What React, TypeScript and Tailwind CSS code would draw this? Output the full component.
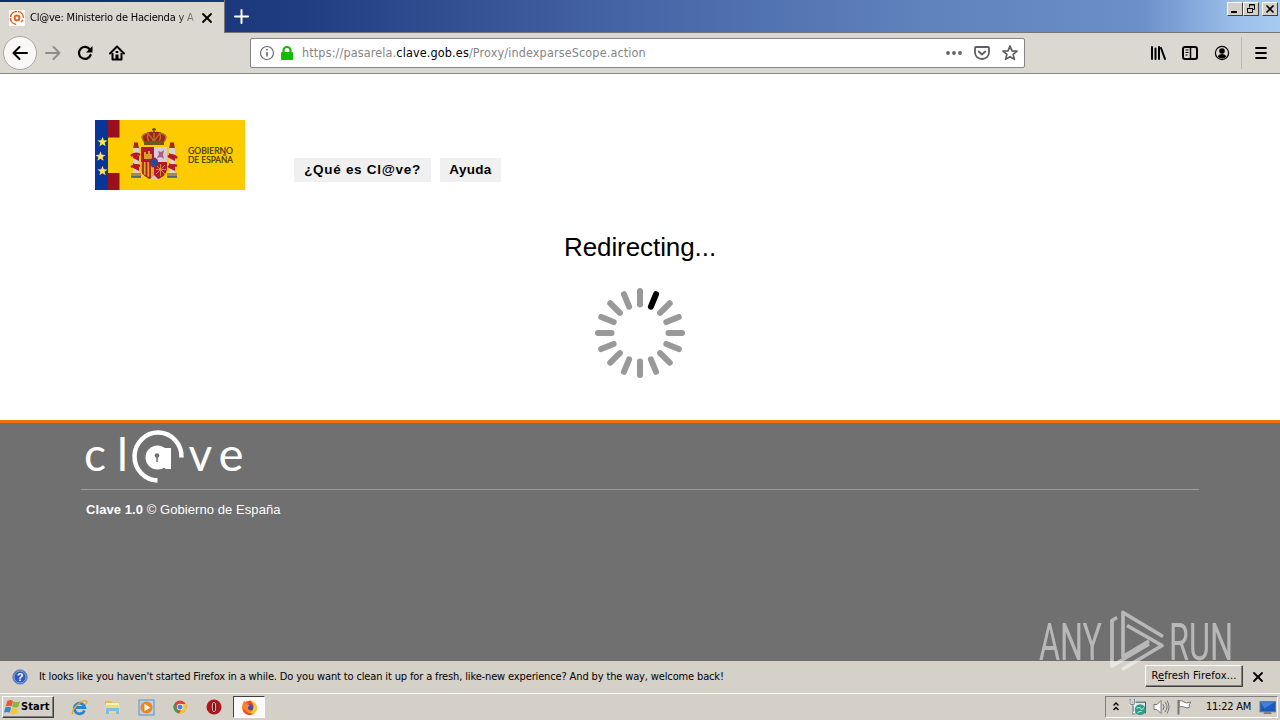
import React from 'react';
import { LuX } from 'react-icons/lu';

const ui = "font-['DejaVu_Sans_Condensed','DejaVu_Sans',sans-serif] [font-stretch:condensed]";

function Star({ x, y }: { x: number; y: number }) {
  return (
    <path
      transform={`translate(${x} ${y}) scale(1.05)`}
      d="M0-5 1.2-1.6 4.8-1.5 2 .7 3 4.1 0 2.1-3 4.1-2 .7-4.8-1.5-1.2-1.6Z"
      fill="#ffe45a"
    />
  );
}

function Pillar({ x }: { x: number }) {
  return (
    <g transform={`translate(${x} 0)`}>
      <rect x="-3" y="28" width="6" height="28" fill="#d9d3cb" />
      <path d="M-3 33l6 3v5l-6-3zM-3 43l6 3v5l-6-3z" fill="#b5182a" />
      <path d="M-3 28h6l-1-4h-4z" fill="#7c4a12" />
      <rect x="-2" y="22.500" width="4" height="3" fill="#b5182a" />
      <path d="M-5 53H5v4H-5z" fill="#a78b3f" />
      <path d="M-5 57H5" stroke="#35599c" strokeWidth="1.500" />
    </g>
  );
}

function Emblem() {
  return (
    <svg width="150" height="70" viewBox="0 0 150 70" className="block">
      <rect width="150" height="70" fill="#fecb00" />
      <rect width="13" height="70" fill="#0a3598" />
      <path d="M13 0H24.500V17.500H13zM13 53H24.500V70H13z" fill="#990f1b" />
      <Star x={7.5} y={22} />
      <Star x={5.5} y={36.500} />
      <Star x={7.5} y={51} />
      <Pillar x={41} />
      <Pillar x={77} />
      <path d="M36 36q4-4 9-1M73 37q4-4 9 1M36 47q5-3 9-1M73 47q5-3 9-1" stroke="#b5182a" strokeWidth="2.500" fill="none" />
      <path d="M49 22q-5-6 0-8 5-3 10-2 5-1 10 2 5 2 0 8z" fill="#a71d25" />
      <path d="M49 22q-4-6 1-8 4-2 9 8 5-10 9-8 5 2 1 8M59 22V11M54 22q-3-6 0-9M64 22q3-6 0-9" stroke="#a87a1c" strokeWidth="1.400" fill="none" />
      <path d="M59 8v5M57 9.500h4" stroke="#634116" strokeWidth="1.300" />
      <rect x="49" y="21" width="20" height="4" fill="#7d5015" />
      <path d="M51 23h2m2 0h2m2 0h2m2 0h2" stroke="#35713b" strokeWidth="1.500" />
      <path d="M46 27H72V49Q71 58 59 60 47 58 46 49Z" fill="#b01a2e" />
      <path d="M59 27H72V42H59z" fill="#dbcbd5" />
      <path d="M46 42H59V58Q48 57 46 49Z" fill="#dfa71b" />
      <path d="M48 42V54M51.500 42V56M55 42V58" stroke="#b01a2e" strokeWidth="1.700" />
      <path d="M49 38V32h2v2h2v-3h2v3h2v5h-8z" fill="#d7a127" />
      <path d="M62 38l2-4-1-3 3 1 3-2-1 5 1 4-3-2z" fill="#b25c83" />
      <path d="M61 45l9 9M70 45l-9 9M61 49.500h10M65.500 44v12" stroke="#cf8c28" strokeWidth="1" />
      <ellipse cx="59" cy="42.500" rx="3.600" ry="4.500" fill="#234b9e" stroke="#b01a2e" />
      <path d="M54 60l5-5 5 5z" fill="#d9cba7" />
      <g fontFamily="Lato, sans-serif" fontSize="9.500" fill="#38300c" stroke="#38300c" strokeWidth=".2">
        <text x="93" y="33.500" textLength="45" lengthAdjust="spacingAndGlyphs">GOBIERNO</text>
        <text x="93" y="42.500" textLength="45" lengthAdjust="spacingAndGlyphs">DE ESPAÑA</text>
      </g>
    </svg>
  );
}

function Spinner() {
  return (
    <svg width="92" height="92" viewBox="-46 -46 92 92" className="block">
      {Array.from({ length: 16 }, (_, i) => (
        <line
          key={i}
          x1="0"
          y1="-42"
          x2="0"
          y2="-28.500"
          transform={`rotate(${i * 22.5})`}
          stroke={i === 1 ? '#000' : '#999'}
          strokeWidth="6"
          strokeLinecap="round"
        />
      ))}
    </svg>
  );
}

function ClaveLogo() {
  return (
    <svg width="164" height="60" viewBox="82 428 164 60" className="block overflow-visible">
      <g fontFamily="Lato, sans-serif" fontSize="46" fill="#fff">
        <text x="84" y="470.500">c</text>
        <text x="117" y="470.500">l</text>
        <text x="188.500" y="470.500">v</text>
        <text x="218.500" y="470.500" textLength="25" lengthAdjust="spacingAndGlyphs">e</text>
      </g>
      <path d="M181.500 457.500A23.500 24 0 1 0 157.500 480.500" fill="none" stroke="#fff" strokeWidth="4.500" />
      <circle cx="157.500" cy="457.500" r="12" fill="#fff" />
      <path d="M161 448h10v21h-5l-5-3z" fill="#fff" />
      <circle cx="157" cy="455.500" r="2.300" fill="#707070" />
      <path d="M156.300 456h1.500v6h-1.500z" fill="#707070" />
    </svg>
  );
}

function Watermark() {
  return (
    <svg width="200" height="66" viewBox="1036 608 200 66" className="absolute left-[1036px] top-[608px] opacity-50">
      <g fontFamily="Roboto, sans-serif" fontWeight="400" fontSize="51" fill="#fff">
        <text x="1039" y="659.500" textLength="63" lengthAdjust="spacingAndGlyphs">ANY</text>
        <text x="1169" y="659.500" textLength="64" lengthAdjust="spacingAndGlyphs">RUN</text>
      </g>
      <g fill="none" stroke="#fff" strokeWidth="3.700" strokeLinejoin="round">
        <path d="M1117 617.500L1112 620.500V666L1149 644" />
        <path d="M1163 636.500L1123 612.500V656.500L1149 641" />
        <path d="M1127 625.500L1162 645.500L1122 669.500" />
      </g>
    </svg>
  );
}

function Tab() {
  return (
    <div className="mt-[2px] flex h-[31px] w-[224px] items-center bg-[#dbd8d2] pl-[9px]">
      <svg width="16" height="16" viewBox="0 0 16 16" className="shrink-0 bg-white">
        <g fill="none" stroke="#e8601c">
          <circle cx="8" cy="8" r="2.400" strokeWidth="2" />
          <path d="M14.500 8A6.500 6.500 0 1 0 8 14.500" strokeWidth="1.500" strokeDasharray="9 1" />
          <path d="M12 12l2-2" strokeWidth="1.500" />
        </g>
      </svg>
      <span className={`${ui} ml-[5px] w-[165px] overflow-hidden whitespace-nowrap pt-px text-[11px] tracking-[-0.2px] text-black [mask-image:linear-gradient(to_right,black_145px,transparent_174px)]`}>
        Cl@ve: Ministerio de Hacienda y A
      </span>
      <LuX className="ml-[4px] shrink-0 text-black" size={16} strokeWidth={2.7} />
    </div>
  );
}

function WindowButton({ children }: { children: React.ReactNode }) {
  return (
    <div className="h-[14px] w-[16px] border border-b-[#404040] border-l-white border-r-[#404040] border-t-white bg-[#d4d0c8]">
      <svg width="14" height="12" viewBox="0 0 14 12" fill="none" stroke="#000" className="block">
        {children}
      </svg>
    </div>
  );
}

function TitleBar() {
  return (
    <div className="flex h-[33px] border-b border-[#777] bg-[linear-gradient(90deg,#0f2b70_0px,#213d82_300px,#4564a5_620px,#6082bd_930px,#6a8fc9_1140px,#9dc0ec_1240px,#a6caf0_1280px)]">
      <Tab />
      <div className="flex h-[32px] w-[33px] items-center justify-center border-l border-[#777]">
        <svg width="15" height="15" viewBox="0 0 15 15" className="block">
          <path d="M7.500 1v13M1 7.500h13" stroke="#fff" strokeWidth="2" strokeLinecap="round" />
        </svg>
      </div>
      <div className="ml-auto mr-[2px] mt-[2px] flex">
        <WindowButton><path d="M3 9h6" strokeWidth="2" /></WindowButton>
        <WindowButton>
          <path d="M5.500 4.500v-3h5v5H9M5 2h6M3.500 5.500h5v4h-5zM3 5.500h6" />
        </WindowButton>
        <div className="w-[3px]" />
        <WindowButton><path d="M3.500 2.500l7 7M10.500 2.500l-7 7" strokeWidth="1.700" /></WindowButton>
      </div>
    </div>
  );
}

function Toolbar() {
  return (
    <div className="flex h-[41px] items-center border-b border-[#888] bg-[#dbd8d2]">
      <div className="ml-[3px] flex h-[34px] w-[34px] items-center justify-center rounded-full border border-[#aaa8a4] bg-[#f9f8f7]">
        <svg width="16" height="16" viewBox="0 0 16 16" fill="none" stroke="#000" strokeWidth="2" strokeLinecap="round" strokeLinejoin="round">
          <path d="M15 8H1.500M7.500 2L1.500 8l6 6" />
        </svg>
      </div>
      <svg className="ml-[8px]" width="16" height="16" viewBox="0 0 16 16" fill="none" stroke="#8f8d8a" strokeWidth="2" strokeLinecap="round" strokeLinejoin="round">
        <path d="M1 8h13.500M8.500 2l6 6-6 6" />
      </svg>
      <svg className="ml-[16px]" width="16" height="16" viewBox="0 0 16 16">
        <path d="M13 4.600A6 6 0 1 0 13.600 10" fill="none" stroke="#000" strokeWidth="2.200" strokeLinecap="round" />
        <path d="M15.500 1v6.500H9z" fill="#000" />
      </svg>
      <svg className="ml-[16px]" width="16" height="16" viewBox="0 0 16 16">
        <path d="M1 8.500L8 1.500l7 7" fill="none" stroke="#000" strokeWidth="2" strokeLinecap="round" strokeLinejoin="round" />
        <path d="M3.500 8v6.500h9V8" fill="none" stroke="#000" strokeWidth="2" strokeLinejoin="round" />
        <path d="M6.500 14V9.500h3V14z" fill="#000" />
        <path d="M6.700 6h2.600v2H6.700z" fill="#000" />
      </svg>
      <div className="ml-[125px] flex h-[30px] w-[775px] items-center rounded-[2px] border border-[#858585] bg-white pl-[8px] pr-[6px]">
        <svg width="16" height="16" viewBox="0 0 16 16" className="shrink-0">
          <circle cx="8" cy="8" r="6.500" fill="none" stroke="#6d6d6d" strokeWidth="1.200" />
          <path d="M8 7v4.500M8 4v1.600" stroke="#6d6d6d" strokeWidth="1.600" />
        </svg>
        <svg width="14" height="16" viewBox="0 0 14 16" className="ml-[5px] shrink-0">
          <rect x="1" y="7" width="12" height="8" rx="1" fill="#12bc00" />
          <path d="M3.500 8V5.500a3.500 3.500 0 0 1 7 0V8" stroke="#12bc00" strokeWidth="2.200" fill="none" />
        </svg>
        <span className={`${ui} ml-[8px] whitespace-nowrap pt-px text-[12.500px] tracking-[0.14px] text-[#858585]`}>
          https://pasarela.<span className="text-black">clave.gob.es</span>/Proxy/indexparseScope.action
        </span>
        <svg width="16" height="16" viewBox="0 0 16 16" className="ml-auto" fill="#636363">
          <circle cx="2" cy="8" r="1.900" /><circle cx="8" cy="8" r="1.900" /><circle cx="14" cy="8" r="1.900" />
        </svg>
        <svg width="16" height="16" viewBox="0 0 16 16" className="ml-[12px]" fill="none" stroke="#5e5e5e" strokeWidth="1.800" strokeLinecap="round" strokeLinejoin="round">
          <path d="M2 2h12q1 0 1 1v4.500a7 6.500 0 0 1-14 0V3q0-1 1-1z" /><path d="M4.700 6.500L8 9.500l3.300-3" />
        </svg>
        <svg width="16" height="16" viewBox="0 0 16 16" className="ml-[12px]" fill="none" stroke="#5e5e5e" strokeWidth="1.700" strokeLinejoin="round">
          <path d="M8 1l2 4.800 5 .3-3.900 3.300 1.300 5L8 11.700l-4.400 2.700 1.300-5L1 6.100l5-.3z" />
        </svg>
      </div>
      <svg className="ml-[125px]" width="16" height="16" viewBox="0 0 16 16" stroke="#000" strokeLinecap="round">
        <path d="M2 2v12M5.500 3.500V14M9 2v12M11 3l4 11" fill="none" strokeWidth="2" />
      </svg>
      <svg className="ml-[16px]" width="16" height="16" viewBox="0 0 16 16" fill="none" stroke="#000">
        <rect x="1" y="2" width="14" height="12" rx="2" strokeWidth="2" /><path d="M8.500 2v12" strokeWidth="1.500" /><path d="M3.500 5h3M3.500 7.500h3M3.500 10h2" />
      </svg>
      <svg className="ml-[16px]" width="16" height="16" viewBox="0 0 16 16">
        <circle cx="8" cy="8" r="6.600" fill="none" stroke="#000" strokeWidth="1.200" />
        <circle cx="8" cy="6" r="2.800" /><path d="M3.500 11.500Q5 8.800 8 9q3-.2 4.500 2.500Q10.500 13.500 8 13.500T3.500 11.500z" />
      </svg>
      <div className="ml-[11px] h-[32px] w-px bg-[#bcb9b4]" />
      <svg className="ml-[11px]" width="16" height="16" viewBox="0 0 16 16" stroke="#000" strokeWidth="1.800" strokeLinecap="round">
        <path d="M3 3h10M3 8h10M3 13h10" />
      </svg>
    </div>
  );
}

function Page() {
  return (
    <main className="relative h-[587px] bg-white font-['Liberation_Sans',sans-serif]">
      <div className="flex h-[346px] flex-col">
        <div className="flex items-end pl-[95px] pt-[46px]">
          <Emblem />
          <div className="mb-[8px] ml-[49px] flex gap-[9px] text-[13.500px] font-bold text-black">
            <a className="flex h-[24px] w-[137px] items-center justify-center whitespace-nowrap bg-[#f0f0f0] tracking-[0.7px]">¿Qué es Cl@ve?</a>
            <a className="flex h-[24px] w-[61px] items-center justify-center bg-[#f0f0f0] tracking-[0.3px]">Ayuda</a>
          </div>
        </div>
        <h1 className="mt-[41px] text-center text-[26px] leading-[32px] tracking-[-0.08px] text-black">Redirecting...</h1>
        <div className="mt-[24px] flex justify-center">
          <Spinner />
        </div>
      </div>
      <footer className="h-[241px] border-t-[3px] border-[#f07010] bg-[#707070] pl-[81px] pr-[81px] pt-[5px] text-white">
        <div className="h-[62px] border-b border-[#9b9b9b] pl-[1px]"><ClaveLogo /></div>
        <p className="ml-[5px] mt-[11px] text-[13px] leading-[18px] tracking-[0.07px]"><b>Clave 1.0</b> © Gobierno de España</p>
      </footer>
    </main>
  );
}

function Notification() {
  return (
    <div className="flex h-[32px] items-center bg-[#d5d0c8]">
      <svg className="ml-[12px]" width="16" height="16" viewBox="0 0 16 16">
        <circle cx="8" cy="8" r="7.300" fill="#2859bd" stroke="#8497b9" />
        <circle cx="8" cy="8" r="6" fill="none" stroke="#b9cdec" strokeWidth=".7" />
        <text x="8" y="12" textAnchor="middle" fill="#fff" fontSize="11" fontWeight="700" fontFamily="Liberation Sans">?</text>
      </svg>
      <span className={`${ui} ml-[11px] whitespace-nowrap pt-px text-[11px] tracking-[-0.14px] text-black`}>
        It looks like you haven't started Firefox in a while. Do you want to clean it up for a fresh, like-new experience? And by the way, welcome back!
      </span>
      <button className={`${ui} relative z-10 ml-auto mt-[-2px] h-[22px] w-[98px] whitespace-nowrap border border-b-[#404040] border-l-white border-r-[#404040] border-t-white bg-[#d5d0c8] pt-px text-[11px] tracking-[0.15px] text-black shadow-[inset_-1px_-1px_#808080]`}>
        R<u>e</u>fresh Firefox...
      </button>
      <LuX className="ml-[7px] mr-[14px]" size={16} strokeWidth={2.7} />
    </div>
  );
}

function StartFlag() {
  return (
    <svg width="17" height="17" viewBox="0 0 16 16">
      <path d="M3 2q3-2 5.500-.2L7 7Q4.500 5.500 1.500 7z" fill="#e9572d" />
      <path d="M9 2q3 1.500 6 .2L13.500 7.500Q10.500 8.500 7.700 7z" fill="#80ba36" />
      <path d="M1.200 8Q4 6.500 6.700 8L5.400 13Q3 11.500 0 13z" fill="#3b86c8" />
      <path d="M7.400 8.300q3 1.400 5.900.3L12 13.500Q9 14.800 6 13.300z" fill="#f9c32f" />
    </svg>
  );
}

function Taskbar() {
  return (
    <div className="flex h-[27px] items-center border-t border-white bg-[#d4d0c8]">
      <button className={`${ui} ml-[2px] flex h-[22px] w-[52px] items-center border border-b-[#404040] border-l-white border-r-[#404040] border-t-white pl-[1px] text-[11px] font-bold tracking-[0.1px] text-black shadow-[inset_-1px_-1px_#808080]`}>
        <StartFlag />Start
      </button>
      <svg className="ml-[17px]" width="17" height="17" viewBox="0 0 17 17" fill="none">
        <path d="M13.500 11.500A5.300 5.300 0 1 1 13.800 8.500H5" stroke="#2784d5" strokeWidth="2.800" />
        <path d="M2 15Q0 13 4 8.500 11 0 15 2q2 1-1 4" stroke="#e1aa2b" strokeWidth="1.400" />
      </svg>
      <svg className="ml-[16px]" width="17" height="17" viewBox="0 0 17 17">
        <path d="M1 2h6l1 1.500h7V13H1z" fill="#e3bc55" /><path d="M2 4h13v4H2z" fill="#fff1a6" /><path d="M1 6h15v8H1z" fill="#f5d978" />
        <path d="M2 15V10q0-1 1-1h11q1 0 1 1v5h-3v-3H5v3z" fill="#82bddd" />
      </svg>
      <svg className="ml-[17px]" width="17" height="17" viewBox="0 0 17 17">
        <rect x="1" y="1" width="15" height="15" fill="#b6d4ea" stroke="#5d91c0" /><circle cx="8.500" cy="8.500" r="6" fill="#ef8418" /><path d="M6.500 5l6 3.500-6 3.500z" fill="#fff" />
      </svg>
      <svg className="ml-[17px]" width="16" height="16" viewBox="0 0 16 16">
        <circle cx="8" cy="8" r="6.500" fill="#e04232" /><path d="M2.400 4.800L7 14.500A6.500 6.500 0 0 1 2.400 4.800z" fill="#32a350" /><path d="M8 5h5.800A6.500 6.500 0 0 1 7 14.500L10.500 9z" fill="#f7c928" /><circle cx="8" cy="8" r="3.200" fill="#fff" /><circle cx="8" cy="8" r="2.500" fill="#4b83dc" />
      </svg>
      <svg className="ml-[18px]" width="16" height="16" viewBox="0 0 16 16">
        <circle cx="8" cy="8" r="7.500" fill="#b3151c" /><ellipse cx="8" cy="8" rx="2.800" ry="5.700" fill="#d4d0c8" stroke="#861015" /><ellipse cx="8" cy="8" rx="1.200" ry="4.600" fill="#761014" />
      </svg>
      <div className="ml-[11px] flex h-[22px] w-[32px] items-center justify-center border border-b-white border-l-[#404040] border-r-white border-t-[#404040] bg-[#fbfaf9]">
        <svg width="17" height="17" viewBox="0 0 17 17">
          <circle cx="8.500" cy="9" r="7.200" fill="#f2472f" /><path d="M8 1q6 1 7.500 6t-3 8l-6-2q6 0 6-5T8 1z" fill="#ffc928" /><path d="M3 2q-3 5-1 9l4-3 3-1-2-3z" fill="#ff7d20" /><circle cx="8.500" cy="8.800" r="3.500" fill="#5046b5" /><path d="M4 6q4-1 5 1-3 0-2 3 2 2 4 1-1 3-5 2-4-2-2-7z" fill="#ff8c20" />
        </svg>
      </div>
      <div className="ml-auto mr-[2px] flex h-[22px] w-[173px] items-center border border-b-white border-l-[#808080] border-r-white border-t-[#808080] pl-[6px]">
        <svg width="8" height="10" viewBox="0 0 8 10" fill="none" stroke="#000" strokeWidth="1.400"><path d="M1.500 3.500L4 1l2.500 2.500M1.500 8L4 5.500 6.500 8" /></svg>
        <svg className="ml-[9px]" width="17" height="17" viewBox="0 0 16 16"><rect x="4" y="3" width="11.500" height="10" fill="#dcebee" stroke="#42636b" /><path d="M1 1v4h4V1M3 5v8h3" fill="none" stroke="#fff" strokeWidth="2" /><path d="M1 0v5h4V0M3 5v9h3" fill="none" stroke="#56656b" strokeWidth=".8" /><circle cx="10.500" cy="10" r="5" fill="#31988c" /><path d="M7 9q3-2 4 0t3-1M8 13q2-2 4-1" stroke="#a9e3cb" fill="none" /></svg>
        <svg className="ml-[7px]" width="17" height="16" viewBox="0 0 17 16" fill="none"><path d="M1 5.500h3L8 1.500v13l-4-4H1z" fill="#fff" stroke="#777" /><path d="M10 5q2 3 0 6M12 3q4 5 0 10M14 1.500q4 6.500 0 13" stroke="#777" /></svg>
        <svg className="ml-[6px]" width="17" height="16" viewBox="0 0 17 16"><path d="M3 2q3-1 5 1 2 2 7 0l-2 3 1 2q-3 2-6 0-2-1-5 0z" fill="#fff" stroke="#777" /><path d="M2.500 1v14.500" stroke="#777" strokeWidth="2" /></svg>
        <span className={`${ui} ml-[13px] whitespace-nowrap text-[11px] tracking-[-0.25px] text-black`}>11:22 AM</span>
        <svg className="ml-auto mr-[1px]" width="17" height="15" viewBox="0 0 16 14"><rect x="1" y="1.500" width="14.500" height="9.500" fill="#1d59bd" stroke="#5678a0" /><path d="M1.500 2h13L5 8z" fill="#3f83dc" /><path d="M5 11.500h6l1 1.500H4z" fill="#777" /></svg>
      </div>
    </div>
  );
}

export default function App() {
  return (
    <div className="relative h-[720px] w-[1280px] overflow-hidden bg-white">
      <TitleBar />
      <Toolbar />
      <Page />
      <Notification />
      <Taskbar />
      <Watermark />
    </div>
  );
}
